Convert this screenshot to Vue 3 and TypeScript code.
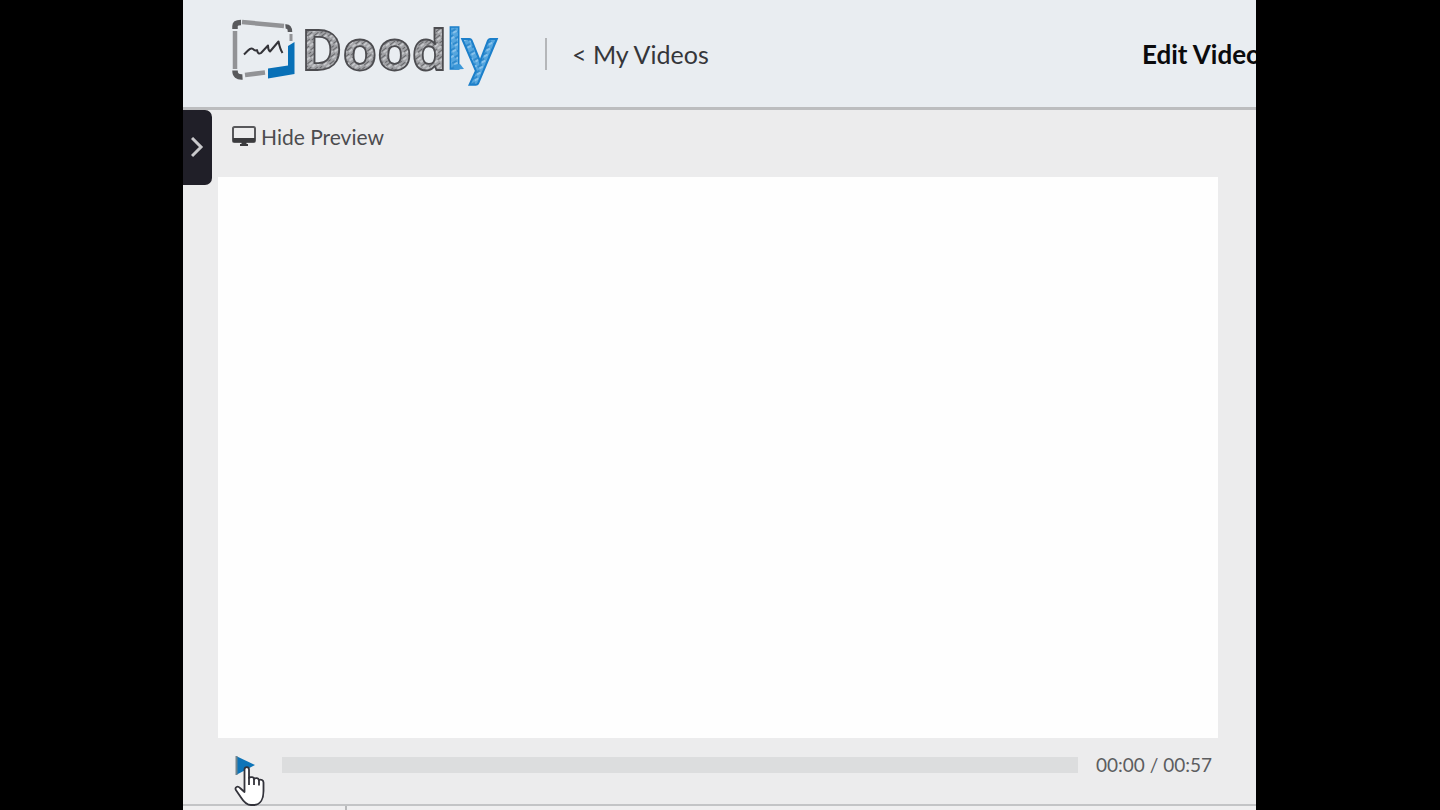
<script setup lang="ts">
import { ref, computed } from 'vue'

const duration = 57
const position = ref(0)
const playing = ref(false)
const previewVisible = ref(true)

function clock(seconds: number): string {
  const m = Math.floor(seconds / 60).toString().padStart(2, '0')
  const s = Math.floor(seconds % 60).toString().padStart(2, '0')
  return `${m}:${s}`
}

const timeLabel = computed(() => `${clock(position.value)} / ${clock(duration)}`)
</script>

<template>
  <div class="letterbox">
    <div class="app">
      <header class="topbar">
        <a class="brand" href="#" aria-label="Doodly">
          <svg class="logo" width="272" height="100" viewBox="228 4 272 100">
            <defs>
              <pattern id="pencil" width="11" height="9" patternUnits="userSpaceOnUse" patternTransform="rotate(-38)">
                <rect width="11" height="9" fill="#a0a1a5" />
                <path d="M0 1.500H6M5 5.500H11M1 7.500H4" stroke="#66676a" stroke-width="1.200" />
                <path d="M1 3.800H5M7 2H11M6 7.500H10" stroke="#cfd1d4" stroke-width="1.400" />
              </pattern>
              <pattern id="crayon" width="10" height="8" patternUnits="userSpaceOnUse" patternTransform="rotate(-30)">
                <rect width="10" height="8" fill="#56a6de" />
                <path d="M0 1H5M5 5H10" stroke="#2582c8" stroke-width="1.300" />
                <path d="M1 3H5M6 7H10" stroke="#98cbf0" stroke-width="1.400" />
              </pattern>
            </defs>
            <g fill="none" stroke="#929396" stroke-width="4.500">
              <path d="M242 22L284 26" />
              <path d="M235 31V69" />
              <path d="M245 75L265 72.500" />
              <path d="M291 34V41" stroke-width="3" />
            </g>
            <g fill="none" stroke="#58595c" stroke-width="5.500">
              <path d="M235 29V26Q235 22.500 241 22.500" />
              <path d="M235 70.500Q235 77.500 242.500 77" />
              <path d="M285.500 26.500Q290 26 290 32" stroke-width="4.500" />
            </g>
            <path d="M288 46L294.500 42V74L268 78.500V68.500L288 65.500Z" fill="#0870b7" />
            <path d="M244 54.500L248 50.500Q251 47.500 253 49Q256 51.500 257 50Q258 55 261 53L268 45.500Q268 50 270 51.500L278.500 41.500Q280 49 282.500 53" fill="none" stroke="#333338" stroke-width="2" stroke-linejoin="round" />
            <g class="wordmark">
              <text x="301" y="70" fill="url(#pencil)" stroke="#4c4c50" stroke-width="1.800">Dood</text>
              <text x="446" y="69" fill="url(#crayon)" stroke="#1b7fca" stroke-width="1.500">l</text>
              <text class="tail" x="462" y="73" fill="url(#crayon)" stroke="#1b7fca" stroke-width="2">y</text>
              <path d="M453 65L460 64L464 69L455 69.500Z" fill="#3b97d8" />
            </g>
          </svg>
        </a>
        <a class="back" href="#">&lt; My Videos</a>
        <h1 class="title">Edit Video</h1>
      </header>

      <main class="workspace">
        <button class="drawer" type="button" aria-label="Open panel">
          <svg width="14" height="22" viewBox="0 0 14 22">
            <path d="M1 1L10 10L1 19" fill="none" stroke="#c9c9cc" stroke-width="3" />
          </svg>
        </button>
        <button class="toggle" type="button" @click="previewVisible = !previewVisible">
          <svg width="24" height="21" viewBox="0 0 24 21">
            <rect x="1" y="1" width="22" height="15" rx="1.500" fill="#ededee" stroke="#58585b" stroke-width="2" />
            <path d="M1 12H23V16H1Z" fill="#3b3b3e" />
            <path d="M9.500 16H14.500V18H16V20H8V18H9.500Z" fill="#3b3b3e" />
          </svg>
          <span>{{ previewVisible ? 'Hide Preview' : 'Show Preview' }}</span>
        </button>
        <section class="canvas" aria-label="Preview"></section>
        <div class="player">
          <button class="play" type="button" :aria-label="playing ? 'Pause' : 'Play'" @click="playing = !playing">
            <svg width="20" height="20" viewBox="0 0 20 20">
              <path d="M1 1L20 10L1 20Z" fill="#0d74b8" />
              <path d="M1.500 1V20" stroke="#71858e" stroke-width="2" />
            </svg>
            <svg class="pointer" width="32" height="42" viewBox="0 0 32 42">
              <path d="M9.500 4.500C9.500 1.200 14 1.200 14 4.500V13C15 11.500 19 12 19 14C20.500 12.500 23.500 13 24 15C26 14 28.500 15 28.500 17.500V26C28.500 33 26 40 18.500 40H16C11.500 40 8.500 36.500 6 32.500L0.900 25C-0.500 22 2.700 20.500 5 23L9.500 27Z" fill="#fff" stroke="#33333b" stroke-width="1.800" stroke-linejoin="round" />
              <path d="M14 12V20M19 14V20M24 15V20.500" fill="none" stroke="#33333b" stroke-width="1.800" />
            </svg>
          </button>
          <input v-model.number="position" class="seek" type="range" min="0" :max="duration" aria-label="Seek" />
          <span class="time">{{ timeLabel }}</span>
        </div>
      </main>
      <footer class="timeline"></footer>
    </div>
  </div>
</template>

<style>
body {
  margin: 0;
  background: #000;
}
</style>

<style scoped>
.letterbox {
  display: grid;
  grid-template-columns: 183fr 1073fr 184fr;
  min-height: 100vh;
  background: #000;
  font-family: Lato, "Open Sans", sans-serif;
}
.app {
  grid-column: 2;
  min-width: 0;
  display: flex;
  flex-direction: column;
  overflow: hidden;
  background: #ececed;
}
.topbar {
  display: flex;
  align-items: center;
  box-sizing: border-box;
  height: 110px;
  padding-left: 45px;
  border-bottom: 3px solid #bcbdbf;
  background: #e9edf1;
}
.brand,
.logo {
  display: block;
}
.brand {
  flex: none;
  margin-right: 45px;
}
.wordmark {
  font: 700 56px "Open Sans", sans-serif;
}
.tail {
  font: 700 66px Lato, sans-serif;
}
.back {
  padding-left: 25px;
  border-left: 2px solid #b4b6b9;
  line-height: 32px;
  font-size: 25px;
  color: #35363a;
  text-decoration: none;
  white-space: nowrap;
}
.title {
  flex: none;
  margin: 0 -5px 0 auto;
  font-size: 26px;
  line-height: 32px;
  font-weight: 700;
  color: #0b0b0d;
  white-space: nowrap;
}
.workspace {
  position: relative;
  flex: 1;
  display: flex;
  flex-direction: column;
  padding: 0 38px 0 35px;
}
.drawer {
  position: absolute;
  left: 0;
  top: 0;
  display: flex;
  align-items: center;
  justify-content: center;
  width: 29px;
  height: 75px;
  padding: 0;
  border: 0;
  border-radius: 0 7px 7px 0;
  background: #201f28;
}
.toggle {
  display: flex;
  align-items: center;
  align-self: flex-start;
  gap: 5px;
  height: 52px;
  margin-bottom: 15px;
  padding: 0 0 0 14px;
  border: 0;
  background: none;
  font: 21px Lato, "Open Sans", sans-serif;
  color: #4c4c50;
}
.canvas {
  flex: 1;
  background: #fefefe;
}
.player {
  display: flex;
  align-items: center;
  height: 54px;
  margin-bottom: 12px;
  padding: 0 6px 0 17px;
}
.play {
  position: relative;
  display: flex;
  width: 20px;
  height: 20px;
  margin-right: 27px;
  padding: 0;
  border: 0;
  background: none;
}
.pointer {
  position: absolute;
  left: 0;
  top: 10px;
  overflow: visible;
}
.seek {
  flex: 1;
  min-width: 0;
  height: 16px;
  margin: 0 18px 0 0;
  appearance: none;
  background: #dcddde;
}
.seek::-webkit-slider-thumb {
  appearance: none;
  width: 1px;
  height: 16px;
  background: transparent;
}
.time {
  font-size: 19px;
  line-height: 24px;
  color: #5c5d60;
  white-space: nowrap;
}
.timeline {
  height: 4px;
  border-top: 2px solid #c3c4c6;
  background: linear-gradient(#b8b9bb, #b8b9bb) 162px 0 / 2px 4px no-repeat #efeff0;
}
</style>
